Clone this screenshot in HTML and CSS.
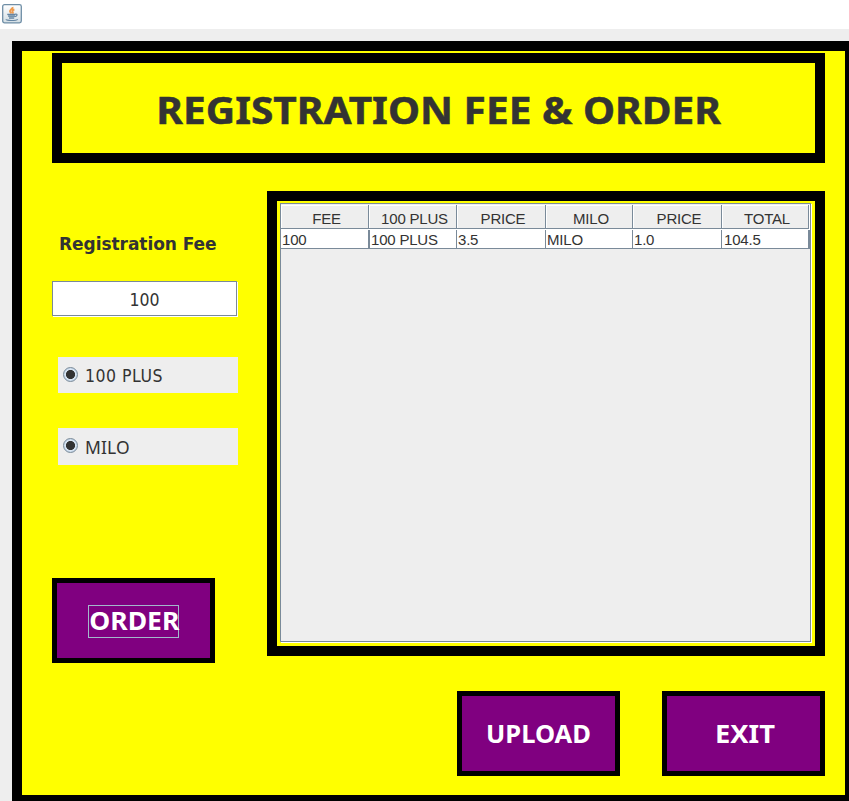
FILE: index.html
```html
<!DOCTYPE html>
<html lang="en">
<head>
<meta charset="utf-8">
<title>Registration Fee &amp; Order</title>
<link rel="stylesheet" href="styles.css">
</head>
<body>
<header class="titlebar">
<svg class="java" width="20" height="20" viewBox="0 0 20 20">
<defs><linearGradient id="tile" x1="0" y1="0" x2="0" y2="1"><stop offset="0" stop-color="#fff"/><stop offset="1" stop-color="#d3dee4"/></linearGradient></defs>
<rect x=".7" y=".7" width="18.6" height="18.2" rx="1.8" fill="url(#tile)" stroke="#6f8ea6" stroke-width="1.3"/>
<path d="M10.600 3C11.200 5 7.400 5.600 8 7.600c.2.700 1 1.100 1.200 1.900M12.400 5.500c-1.700.5-2.500 1.600-1.700 2.600.5.600.2 1.100-.2 1.600" fill="none" stroke="#ee9a4d" stroke-width="1.900"/>
<path d="M5.500 10.200h7.800l-.6 2.500-1.200 1.300H7.600l-1.500-1.500z" fill="#a9bccb"/>
<path d="M5.300 10.300h8M6.300 12.200h6.600M7 14.100h5.200M13.300 10.200c2.500-.4 2.300 2-.6 2.500M4.300 15.200c-.8 1.700 10 1.700 11.400.1" fill="none" stroke="#6585a3" stroke-width="1.200"/>
</svg>
</header>
<main class="panel">
<div class="heading"><h1>REGISTRATION FEE &amp; ORDER</h1></div>
<div class="content">
<section class="form">
<label class="fee-label" for="fee"><span>Registration Fee</span></label>
<div class="field" id="fee"><span>100</span></div>
<div class="option"><i class="radio"></i><span class="plus">100 PLUS</span></div>
<div class="option second"><i class="radio"></i><span class="milo">MILO</span></div>
<button class="btn order"><span class="focus"><span class="t-order">ORDER</span></span></button>
</section>
<section class="side">
<div class="table-frame">
<div class="scroll">
<div class="row head"><div>FEE</div><div>100 PLUS</div><div>PRICE</div><div>MILO</div><div>PRICE</div><div>TOTAL</div></div>
<div class="row data"><div>100</div><div>100 PLUS</div><div>3.5</div><div>MILO</div><div>1.0</div><div>104.5</div></div>
</div>
</div>
<div class="actions"><button class="btn"><span class="t-upload">UPLOAD</span></button><button class="btn"><span class="t-exit">EXIT</span></button></div>
</section>
</div>
</main>
</body>
</html>
```
FILE: styles.css
```css
* { box-sizing: border-box; }
body { margin: 0; width: 849px; height: 801px; overflow: hidden; background: #eee; color: #333; font-family: "Noto Sans", sans-serif; }
.titlebar { height: 29px; background: #fff; padding: 4px 2px; }
.java { display: block; }
.panel { width: 843px; height: 764px; margin: 12px 0 0 12px; border: 10px solid #000; background: #ff0; padding: 2px 20px 0 30px; }
.heading { height: 110px; border: 10px solid #000; display: flex; align-items: center; justify-content: center; }
h1 { margin: 4px 0 0; font-size: 37.5px; line-height: 50px; font-weight: 700; white-space: nowrap; transform: scaleX(1.083); -webkit-text-stroke: 0.5px #333; }
.content { display: flex; margin-top: 28px; }
.form { width: 215px; }
.fee-label { display: block; margin: 41px 0 0 7px; height: 24px; font: 700 17px/24px "DejaVu Sans", sans-serif; letter-spacing: -0.05px; white-space: nowrap; }
.field { width: 185px; height: 35px; margin-top: 25px; border: 1px solid #7a8a99; box-shadow: 1px 1px 0 #fff; background: #fff; display: flex; align-items: center; justify-content: center; padding-top: 3px; font: 17.5px/24px "DejaVu Sans Condensed", "DejaVu Sans", sans-serif; }
.option { width: 180px; height: 36px; margin: 41px 0 0 6px; background: #eee; display: flex; align-items: center; padding-left: 5px; font: 17.5px/24px "DejaVu Sans Condensed", "DejaVu Sans", sans-serif; white-space: nowrap; }
.second { height: 37px; margin-top: 35px; }
.radio { width: 15px; height: 15px; margin: 0 7px 2px 0; border: 1px solid #7a8a99; border-radius: 50%; background: radial-gradient(circle, #333 0 4.2px, #dce7f3 4.9px, #c4d6e9 6.5px); }
.option span { margin-top: 2px; }
.option .plus { letter-spacing: 0.5px; }
.option .milo { margin-top: 0; font-family: "Noto Sans", sans-serif; letter-spacing: 0.1px; }
.btn { width: 163px; height: 85px; padding: 0 0 2px; border: 5px solid #000; background: #800080; color: #fff; font: 700 25.5px/32px "Noto Sans", sans-serif; display: flex; align-items: center; justify-content: center; }
.btn span { white-space: nowrap; }
.order { margin-top: 113px; }
.focus { width: 91px; height: 33px; border: 1px solid #a3b8cc; display: flex; align-items: center; justify-content: center; padding-bottom: 3px; margin-top: 4px; }
.t-order { transform: scaleX(1.04); margin-right: -2px; }
.t-exit { transform: scaleX(1.07); margin-left: 2px; }
.side { width: 558px; }
.table-frame { height: 465px; border: 10px solid #000; padding: 2px 4px 4px 3px; }
.scroll { width: 531px; height: 439px; border: 1px solid #7a8a99; box-shadow: 1px 1px 0 #fff; background: #eee; padding-top: 1px; }
.row { display: grid; grid-template-columns: 88px 88px 89px 87px 89px 87px; font: 15px/18px "Liberation Sans", sans-serif; letter-spacing: -0.2px; background: #fff; }
.head { height: 25px; }
.head div { height: 24px; padding: 5px 0 0 4px; text-align: center; background: #eee; border: solid #7a8a99; border-width: 0 1px 1px 0; box-shadow: inset 1px 1px 0 #fff; white-space: nowrap; }
.data { height: 19px; border-bottom: 1px solid #7a8a99; }
.data div { height: 18px; padding: 1px 0 0 1px; border-right: 1px solid #7a8a99; white-space: nowrap; }
.data div:nth-child(2) { border-left: 1px solid #7a8a99; }
.data div:last-child { border-right-width: 2px; margin-right: -1px; padding-left: 2px; }
.actions { display: flex; justify-content: flex-end; gap: 42px; margin-top: 35px; }
```
